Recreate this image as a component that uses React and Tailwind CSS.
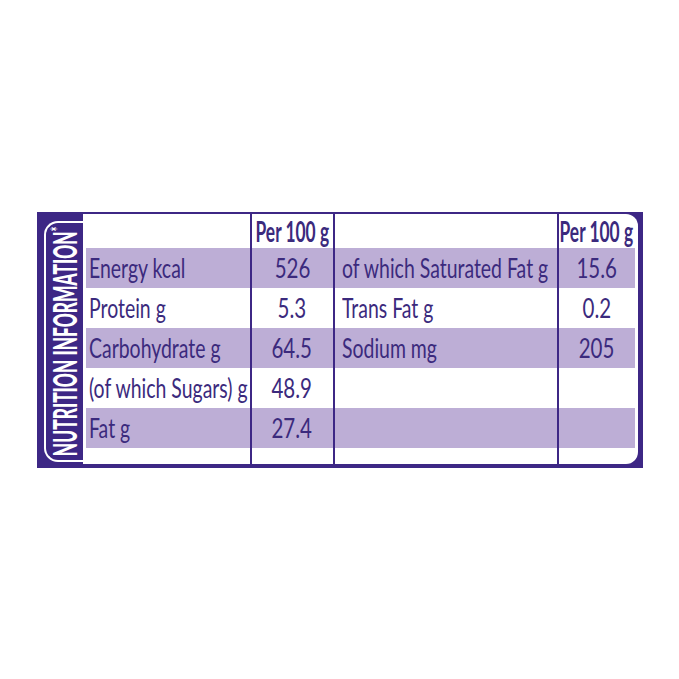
import React from 'react';

const rows = [
  { label: 'Energy kcal', value: '526', label2: 'of which Saturated Fat g', value2: '15.6', band: true },
  { label: 'Protein g', value: '5.3', label2: 'Trans Fat g', value2: '0.2', band: false },
  { label: 'Carbohydrate g', value: '64.5', label2: 'Sodium mg', value2: '205', band: true },
  { label: '(of which Sugars) g', value: '48.9', label2: '', value2: '', band: false },
  { label: 'Fat g', value: '27.4', label2: '', value2: '', band: true },
];

const cols = 'grid grid-cols-[166px_83px_224px_76px]';
const line = 'border-r-2 border-[#3d2785]';

const Label = ({ children }) => (
  <span className="inline-block shrink-0 whitespace-nowrap origin-left scale-x-[0.72] text-[27px] leading-none">
    {children}
  </span>
);

const Value = ({ children }) => (
  <span className="inline-block shrink-0 whitespace-nowrap scale-x-[0.76] text-[27px] leading-none">
    {children}
  </span>
);

const Per100 = () => (
  <span className="inline-block shrink-0 whitespace-nowrap scale-x-[0.62] text-[28px] font-bold leading-none">
    Per 100 g
  </span>
);

export default function App() {
  return (
    <div
      className="h-[679px] w-full bg-white flex items-center justify-center text-[#3b2a7d]"
      style={{ fontFamily: 'Lato, "Open Sans", sans-serif' }}
    >
      <div className="w-[606px] h-[256px] bg-[#3d2785] flex">
        {/* side title */}
        <div className="w-[46px] shrink-0 pl-[7px] pt-[9px] pb-[6px] flex">
          <div className="flex-1 min-w-0 border-l-2 border-y-2 border-white rounded-l-[14px] flex items-center justify-center">
            <span className="shrink-0 whitespace-nowrap text-white font-black text-[33px] leading-none -rotate-90 scale-x-[0.525]">
              NUTRITION INFORMATION<span className="align-top text-[20px]">*</span>
            </span>
          </div>
        </div>

        {/* table */}
        <div className="flex-1 min-w-0 bg-white mt-[2px] mr-[5px] mb-[4px] rounded-r-[12px] px-[3px] flex flex-col overflow-hidden">
          <div className={`${cols} h-[34px]`}>
            <div className={line}></div>
            <div className={`${line} flex items-center justify-center`}>
              <Per100 />
            </div>
            <div className={line}></div>
            <div className="flex items-center justify-center">
              <Per100 />
            </div>
          </div>

          {rows.map((row) => {
            const bg = row.band ? 'bg-[#bdaed6]' : '';
            return (
              <div key={row.label} className={`${cols} h-[40px]`}>
                <div className={`${line} ${bg} flex items-center pl-[3px]`}>
                  <Label>{row.label}</Label>
                </div>
                <div className={`${line} ${bg} flex items-center justify-center`}>
                  <Value>{row.value}</Value>
                </div>
                <div className={`${line} ${bg} flex items-center pl-[7px]`}>
                  <Label>{row.label2}</Label>
                </div>
                <div className={`${bg} flex items-center justify-center`}>
                  <Value>{row.value2}</Value>
                </div>
              </div>
            );
          })}

          <div className={`${cols} flex-1`}>
            <div className={line}></div>
            <div className={line}></div>
            <div className={line}></div>
            <div></div>
          </div>
        </div>
      </div>
    </div>
  );
}
